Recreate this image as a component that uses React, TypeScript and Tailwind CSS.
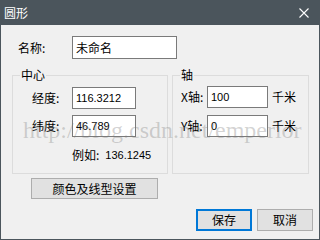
import React from "react";

const cjk = { fontFamily: '"Noto Sans CJK SC", "Liberation Sans", sans-serif' };
const num = { fontFamily: '"Liberation Sans", "Noto Sans CJK SC", sans-serif' };

function Field({ value, width, cjkText = false }: { value: string; width: string; cjkText?: boolean }) {
  return (
    <input
      readOnly
      value={value}
      style={cjkText ? cjk : num}
      className={`${width} border border-[#7a7a7a] bg-white pl-[3px] outline-none text-black ${
        cjkText ? "h-[23px] text-[12px]" : "h-[22px] text-[11px]"
      }`}
    />
  );
}

function Group({ title, className, children }: { title: string; className: string; children: React.ReactNode }) {
  return (
    <div className={`relative border border-[#dcdcdc] h-[99px] ${className}`}>
      <span className="absolute -top-[9px] left-[7px] px-[1px] bg-[#f0f0f0] text-[12px] leading-[16px]">
        {title}
      </span>
      {children}
    </div>
  );
}

export default function App() {
  return (
    <div className="w-[320px] h-[240px] flex flex-col bg-[#4b555c] text-black" style={cjk}>
      {/* Title bar */}
      <div className="h-[25px] flex items-center justify-between shrink-0">
        <span className="ml-[4px] text-[12px] text-white leading-none">圆形</span>
        <svg width="10" height="10" viewBox="0 0 10 10" className="mr-[11px]">
          <path d="M0.5 0.5 L9.5 9.5 M9.5 0.5 L0.5 9.5" stroke="#ffffff" strokeWidth="1.1" />
        </svg>
      </div>

      {/* Body */}
      <div className="relative flex-1 mx-[1px] mb-[1px] bg-[#f0f0f0] flex flex-col">
        <div className="mt-[11px] flex items-center">
          <span className="ml-[17px] w-[54px] text-[12px]">名称:</span>
          <Field value="未命名" width="w-[105px]" cjkText />
        </div>

        <div className="mt-[16px] ml-[11px] flex gap-[4px]">
          <Group title="中心" className="w-[156px]">
            <div className="pt-[11px] flex flex-col">
              <div className="flex items-center">
                <span className="ml-[19px] w-[40px] text-[12px]">经度:</span>
                <Field value="116.3212" width="w-[64px]" />
              </div>
              <div className="mt-[6px] flex items-center">
                <span className="ml-[19px] w-[40px] text-[12px]">纬度:</span>
                <Field value="46.789" width="w-[64px]" />
              </div>
              <div className="mt-[11px] ml-[59px] flex items-center text-[12px] leading-[14px]">
                <span>例如:</span>
                <span className="ml-[6px] text-[11px]" style={num}>136.1245</span>
              </div>
            </div>
          </Group>

          <Group title="轴" className="w-[137px]">
            <div className="pt-[10px] flex flex-col">
              <div className="flex items-center">
                <span className="ml-[8px] w-[26px] text-[12px]">X轴:</span>
                <Field value="100" width="w-[61px]" />
                <span className="ml-[4px] text-[12px]">千米</span>
              </div>
              <div className="mt-[7px] flex items-center">
                <span className="ml-[8px] w-[26px] text-[12px]">Y轴:</span>
                <Field value="0" width="w-[61px]" />
                <span className="ml-[4px] text-[12px]">千米</span>
              </div>
            </div>
          </Group>
        </div>

        <button className="mt-[4px] ml-[30px] w-[127px] h-[21px] border border-[#adadad] bg-[#e1e1e1] text-[12px] leading-none">
          颜色及线型设置
        </button>

        <div className="mt-[10px] mr-[6px] flex justify-end gap-[5px]">
          <button className="w-[56px] h-[22px] border-2 border-[#0078d7] bg-[#e1e1e1] text-[12px] leading-none">
            保存
          </button>
          <button className="w-[56px] h-[22px] border border-[#adadad] bg-[#e1e1e1] text-[12px] leading-none">
            取消
          </button>
        </div>

        {/* watermark */}
        <span
          className="pointer-events-none absolute left-[22px] top-[93px] text-[24px] leading-none whitespace-nowrap text-[rgba(120,120,120,0.32)]"
          style={{ fontFamily: '"Liberation Serif", serif' }}
        >
          http://blog.csdn.net/emperior
        </span>
      </div>
    </div>
  );
}
